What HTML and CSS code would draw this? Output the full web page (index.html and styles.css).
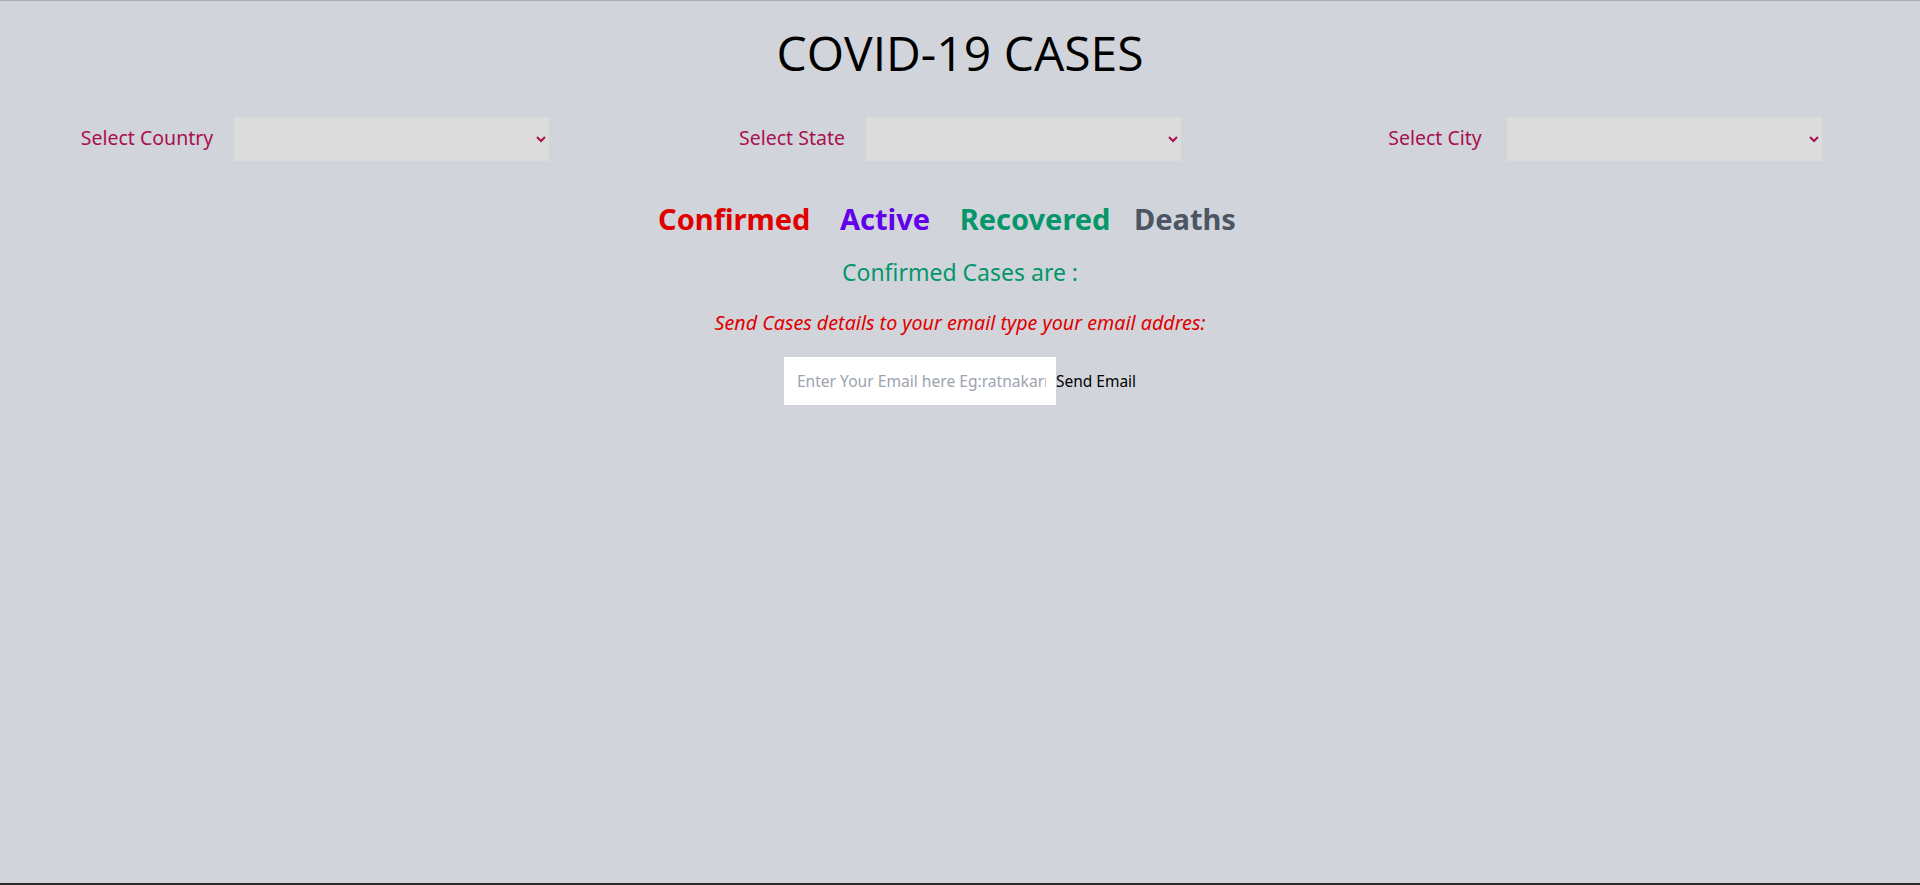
FILE: index.html
```html
<!DOCTYPE html>
<html lang="en">
<head>
<meta charset="utf-8">
<title>COVID-19 CASES</title>
<link rel="stylesheet" href="styles.css">
</head>
<body>
<div class="page">
  <h1 class="title">COVID-19 CASES</h1>
  <div class="filters">
    <div class="filter">
      <label class="filter-label" for="country">Select Country</label>
      <select id="country" class="filter-select"><option></option></select>
    </div>
    <div class="filter">
      <label class="filter-label" for="state">Select State</label>
      <select id="state" class="filter-select"><option></option></select>
    </div>
    <div class="filter">
      <label class="filter-label filter-label-wide" for="city">Select City</label>
      <select id="city" class="filter-select"><option></option></select>
    </div>
  </div>
  <div class="tabs">
    <span class="tab tab-confirmed">Confirmed</span>
    <span class="tab tab-active">Active</span>
    <span class="tab tab-recovered">Recovered</span>
    <span class="tab tab-deaths">Deaths</span>
  </div>
  <p class="cases">Confirmed Cases are :</p>
  <p class="send-note">Send Cases details to your email type your email addres:</p>
  <form class="email-form">
    <input class="email-input" type="email" placeholder="Enter Your Email here Eg:ratnakarr@gmail.com">
    <button class="email-btn" type="button">Send Email</button>
  </form>
</div>
<div class="taskbar"></div>
</body>
</html>
```
FILE: styles.css
```css
html, body {
  margin: 0;
  padding: 0;
}
body {
  background: #d1d5db;
  font-family: "Noto Sans", "Open Sans", sans-serif;
}
.page {
  min-height: 884px;
  box-sizing: border-box;
  border-top: 1px solid #acacac;
  background: #d1d5db;
  text-align: center;
}
.title {
  margin: 19px 0 0;
  font-family: "Open Sans", "Noto Sans", sans-serif;
  font-weight: 400;
  font-size: 48px;
  line-height: 65px;
  color: #000;
}
.filters {
  margin-top: 32px;
  display: grid;
  grid-template-columns: repeat(3, 1fr);
  column-gap: 15px;
}
.filter {
  display: flex;
  align-items: center;
  justify-content: center;
  height: 44px;
}
.filter-label {
  font-size: 19.5px;
  line-height: 28px;
  padding-bottom: 3px;
  color: #a8104f;
  margin-right: 21px;
}
.filter-label-wide {
  margin-right: 25px;
}
.filter-select {
  width: 315px;
  height: 44px;
  border: none;
  border-radius: 0;
  background: #dcdcdc;
  color: #a8104f;
  font-family: inherit;
  font-size: 16px;
  outline: none;
}
.tabs {
  margin-top: 38px;
  line-height: 40px;
  font-size: 29px;
  font-weight: 700;
}
.tab {
  display: inline-block;
  margin: 0 11px;
}
.tab-recovered {
  margin-right: 8px;
}
.tab-deaths {
  margin-left: 8px;
  margin-right: 37px;
}
.tab-confirmed { color: #e00000; }
.tab-active { color: #6200ea; }
.tab-recovered { color: #059669; }
.tab-deaths { color: #4b5563; }
.cases {
  margin: 17px 0 0;
  font-size: 23px;
  line-height: 32px;
  color: #059669;
}
.send-note {
  margin: 21px 0 0;
  font-size: 19.7px;
  line-height: 28px;
  font-style: italic;
  color: #e00000;
}
.email-form {
  margin-top: 20px;
  display: flex;
  justify-content: center;
  align-items: center;
}
.email-input {
  width: 272px;
  height: 48px;
  box-sizing: border-box;
  border: none;
  border-radius: 0;
  background: #fff;
  padding: 0 10px 0 13px;
  font-family: inherit;
  font-size: 15.6px;
  color: #111;
  outline: none;
}
.email-input::placeholder {
  color: #9ca3af;
}
.email-btn {
  border: none;
  background: none;
  padding: 0;
  margin: 0;
  font-family: inherit;
  font-size: 15.5px;
  color: #000;
  cursor: pointer;
}
.taskbar {
  position: fixed;
  left: 0;
  right: 0;
  bottom: 0;
  height: 2px;
  background: #2a2a24;
}
```
